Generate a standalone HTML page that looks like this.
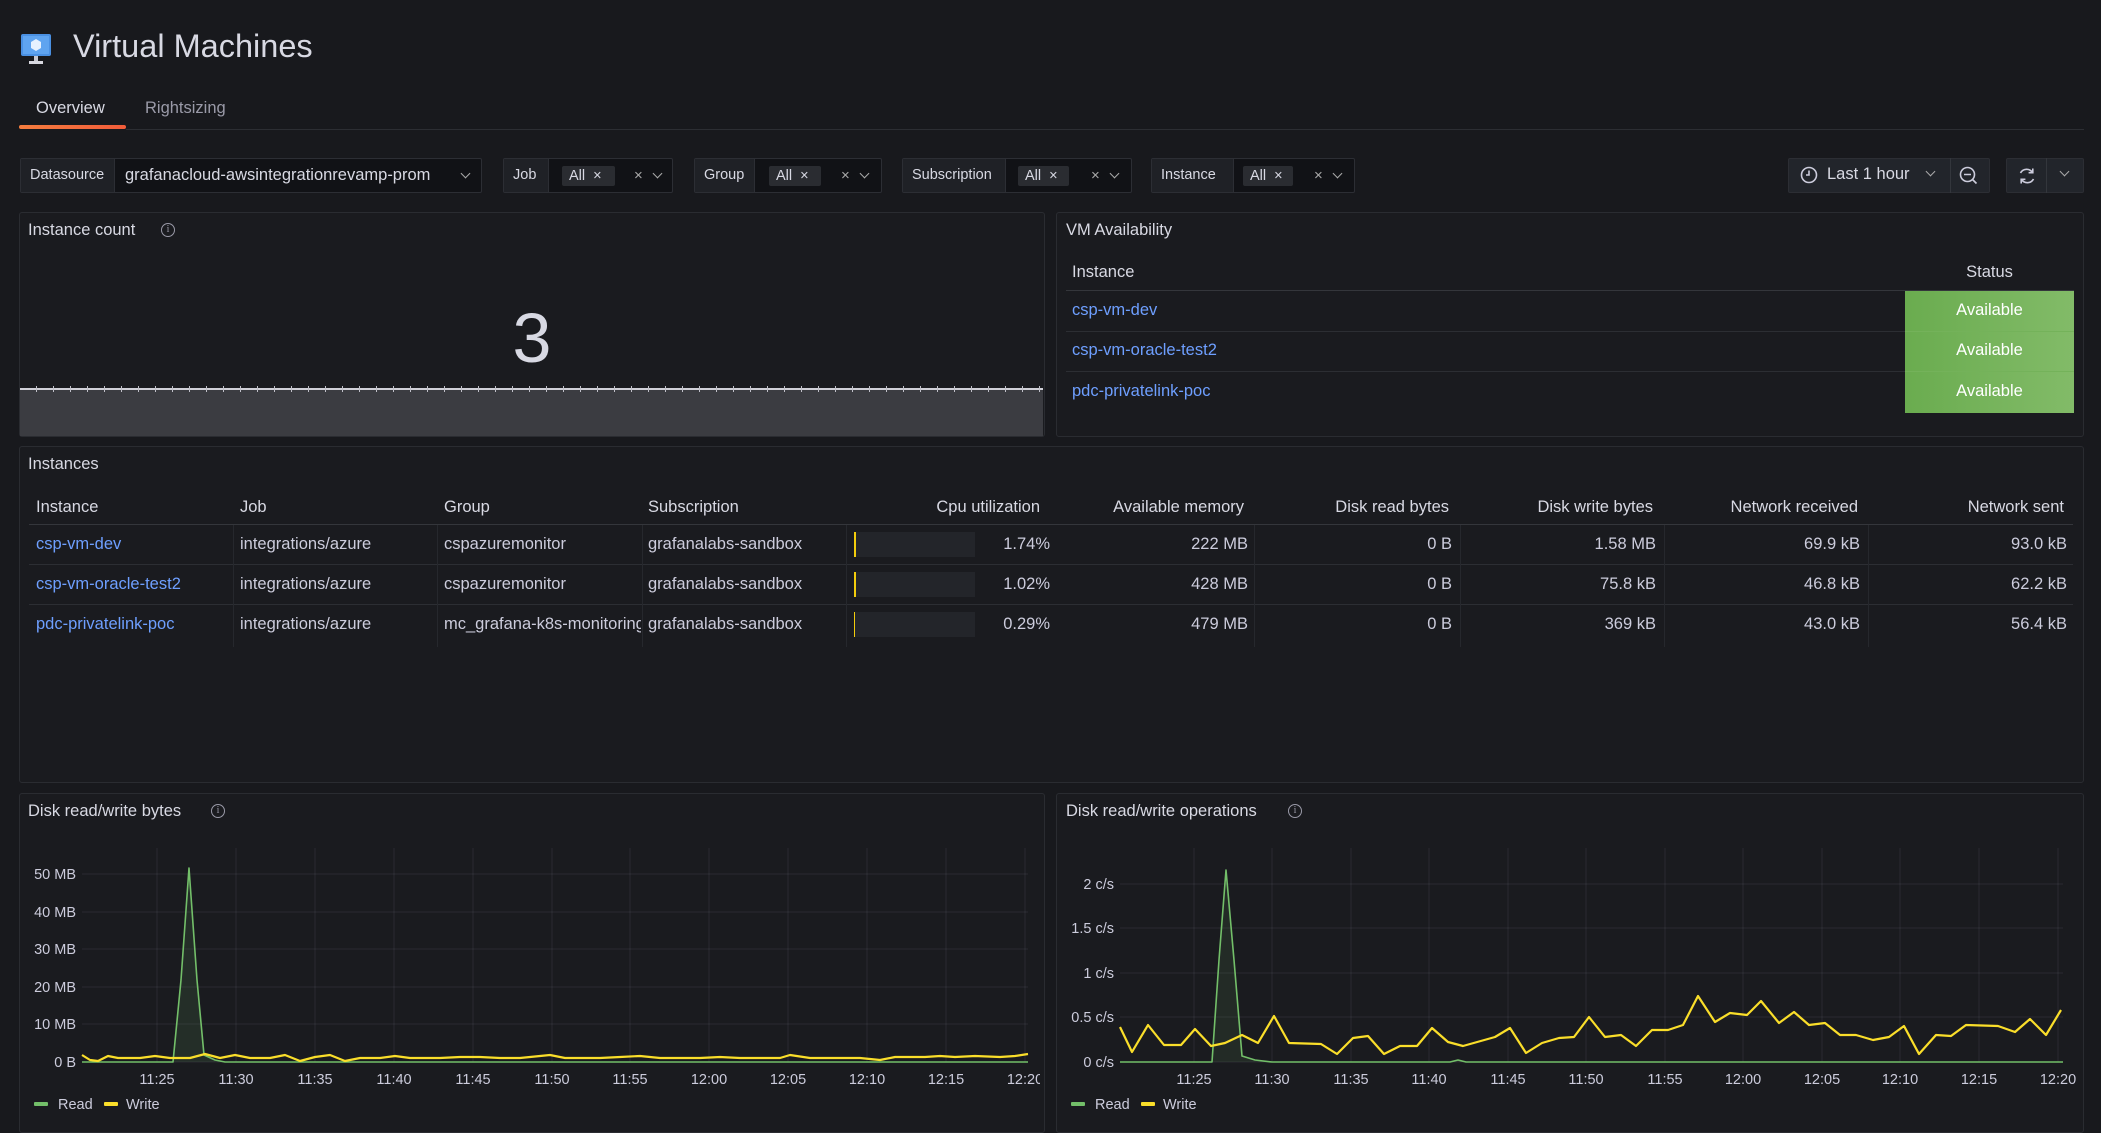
<!DOCTYPE html>
<html><head><meta charset="utf-8">
<style>
*{box-sizing:border-box;margin:0;padding:0}
body{width:2101px;height:1123px;background:#18191d;color:#ccccdc;font-family:"Liberation Sans",sans-serif;position:relative;overflow:hidden}
.a{position:absolute;white-space:nowrap}
.panel{position:absolute;border:1px solid #2a2c31;border-radius:3px;background:#1a1b1f}
.pt{position:absolute;font-size:16.5px;color:#d8d9e3;white-space:nowrap}
.vbox{position:absolute;top:158px;height:35px;border:1px solid #2c2e34;border-radius:2px;background:#111216}
.vl{position:absolute;top:0;left:0;height:33px;background:#1f2126;border-right:1px solid #2c2e34;font-size:14.5px;line-height:33px;padding-left:9px;color:#d8d9e3;white-space:nowrap}
.pill{position:absolute;top:7px;height:20px;background:#2a2c31;border-radius:2px;font-size:14.5px;line-height:20px;padding-left:7px;color:#d8d9e3;white-space:nowrap}
.x{position:absolute;top:0;font-size:15px;line-height:33px;color:#aaa}
.chev{position:absolute;top:13px;width:7px;height:7px;border-right:1.5px solid #aaa;border-bottom:1.5px solid #aaa;transform:rotate(45deg)}
.th{position:absolute;font-size:16.5px;color:#d8d9e3;white-space:nowrap}
.td{position:absolute;font-size:16.5px;color:#ccccdc;white-space:nowrap}
.lk{color:#6e9fff}
.r{text-align:right}
.hl{position:absolute;height:1px;background:#2c2e33}
.vline{position:absolute;width:1px;background:#26282d}
.info{position:absolute;width:14px;height:14px;border:1.3px solid #9a9aa8;border-radius:50%;font-size:10px;line-height:11px;text-align:center;color:#9a9aa8;font-family:"Liberation Serif",serif}
</style></head><body>

<svg class="a" style="left:20px;top:33px" width="32" height="32" viewBox="0 0 32 32">
<rect x="1" y="1" width="30" height="22" rx="2" fill="#4a90e2"/>
<rect x="3" y="3" width="26" height="18" fill="#5fa4f0"/>
<path d="M16 6 l5 3 v6 l-5 3 l-5 -3 v-6z" fill="#e6f1ff"/>
<rect x="14" y="23" width="4" height="6" fill="#c8c8d0"/>
<rect x="9" y="28" width="14" height="3" fill="#d8d8e0"/>
</svg>
<div class="a" style="left:73px;top:28px;font-size:32.5px;color:#d8d9e3">Virtual Machines</div>

<div class="a" style="left:36px;top:99px;font-size:16.5px;color:#d8d9e3">Overview</div>
<div class="a" style="left:145px;top:99px;font-size:16.5px;color:#9a9aa8">Rightsizing</div>
<div class="a" style="left:19px;top:125px;width:107px;height:4px;border-radius:2px;background:linear-gradient(90deg,#f57d3e,#f25c3a)"></div>
<div class="a" style="left:126px;top:129px;width:1958px;height:1px;background:#2c2e33"></div>

<div class="vbox" style="left:20px;width:462px"><div class="vl" style="width:94px">Datasource</div>
<div class="a" style="left:104px;top:0;line-height:33px;font-size:16.5px;color:#d8d9e3">grafanacloud-awsintegrationrevamp-prom</div>
<div class="chev" style="left:441px;top:11px"></div></div>

<div class="vbox" style="left:503px;width:170px"><div class="vl" style="width:45px">Job</div>
<div class="pill" style="left:58px;width:53px">All <span style="margin-left:4px">×</span></div>
<div class="x" style="left:130px">×</div><div class="chev" style="left:150px;top:11px"></div></div>

<div class="vbox" style="left:694px;width:188px"><div class="vl" style="width:60px">Group</div>
<div class="pill" style="left:74px;width:52px">All <span style="margin-left:4px">×</span></div>
<div class="x" style="left:146px">×</div><div class="chev" style="left:166px;top:11px"></div></div>

<div class="vbox" style="left:902px;width:230px"><div class="vl" style="width:103px">Subscription</div>
<div class="pill" style="left:115px;width:51px">All <span style="margin-left:4px">×</span></div>
<div class="x" style="left:188px">×</div><div class="chev" style="left:208px;top:11px"></div></div>

<div class="vbox" style="left:1151px;width:204px"><div class="vl" style="width:82px">Instance</div>
<div class="pill" style="left:91px;width:50px">All <span style="margin-left:4px">×</span></div>
<div class="x" style="left:162px">×</div><div class="chev" style="left:182px;top:11px"></div></div>

<div class="a" style="left:1788px;top:158px;width:202px;height:35px;background:#22252b;border:1px solid #2c2e34;border-radius:2px"></div>
<div class="a" style="left:1950px;top:158px;width:1px;height:35px;background:#33363c"></div>
<svg class="a" style="left:1800px;top:166px" width="18" height="18"><circle cx="9" cy="9" r="7.5" fill="none" stroke="#ccccdc" stroke-width="1.6"/><path d="M9 4.5V9H6" fill="none" stroke="#ccccdc" stroke-width="1.6"/></svg>
<div class="a" style="left:1827px;top:165px;font-size:16.5px;color:#d8d9e3">Last 1 hour</div>
<div class="chev" style="left:1927px;top:168px"></div>
<svg class="a" style="left:1959px;top:166px" width="20" height="20"><circle cx="8.5" cy="8.5" r="7" fill="none" stroke="#ccccdc" stroke-width="1.6"/><path d="M5 8.5h7M13.5 13.5l4 4" stroke="#ccccdc" stroke-width="1.6"/></svg>
<div class="a" style="left:2006px;top:158px;width:78px;height:35px;background:#22252b;border:1px solid #2c2e34;border-radius:2px"></div>
<div class="a" style="left:2046px;top:158px;width:1px;height:35px;background:#33363c"></div>
<svg class="a" style="left:2017px;top:166px" width="20" height="20"><path d="M15.5 6.5A7 7 0 0 0 3.5 7M4.5 13.5A7 7 0 0 0 16.5 13" fill="none" stroke="#ccccdc" stroke-width="1.6"/><path d="M15.8 2.5v4.2h-4.2M4.2 17.5v-4.2h4.2" fill="none" stroke="#ccccdc" stroke-width="1.6"/></svg>
<div class="chev" style="left:2061px;top:168px"></div>

<div class="panel" style="left:19px;top:212px;width:1026px;height:225px"></div>
<div class="pt" style="left:28px;top:221px">Instance count</div>
<div class="info" style="left:161px;top:223px">i</div>
<div class="a" style="left:20px;top:389px;width:1023px;height:47px;background:#3b3c41"></div>
<div class="a" style="left:20px;top:388px;width:1023px;height:2px;background:#d0d0d8"></div>
<div class="a" style="left:20px;top:386px;width:1023px;height:6px;background:repeating-linear-gradient(90deg,transparent 0 16px,#c0c0c8 16px 17px)"></div>
<div class="a" style="left:500px;top:298px;font-size:70px;color:#d8d9e3;width:64px;text-align:center">3</div>

<div class="panel" style="left:1056px;top:212px;width:1028px;height:225px"></div>
<div class="pt" style="left:1066px;top:221px">VM Availability</div>
<div class="th" style="left:1072px;top:263px">Instance</div>
<div class="th" style="left:1905px;width:169px;top:263px;text-align:center">Status</div>
<div class="hl" style="left:1066px;top:290px;width:1008px;background:#34363b"></div>
<div class="hl" style="left:1066px;top:331px;width:839px"></div>
<div class="hl" style="left:1066px;top:371px;width:839px"></div>
<div class="a" style="left:1905px;top:291px;width:169px;height:122px;background:linear-gradient(90deg,#6aac4f,#82bb68)"></div>
<div class="hl" style="left:1905px;top:331px;width:169px;background:#74b25a"></div>
<div class="hl" style="left:1905px;top:371px;width:169px;background:#74b25a"></div>
<div class="td lk" style="left:1072px;top:301px">csp-vm-dev</div>
<div class="td lk" style="left:1072px;top:341px">csp-vm-oracle-test2</div>
<div class="td lk" style="left:1072px;top:382px">pdc-privatelink-poc</div>
<div class="td" style="left:1905px;width:169px;text-align:center;top:301px;color:#fff">Available</div>
<div class="td" style="left:1905px;width:169px;text-align:center;top:341px;color:#fff">Available</div>
<div class="td" style="left:1905px;width:169px;text-align:center;top:382px;color:#fff">Available</div>

<div class="panel" style="left:19px;top:446px;width:2065px;height:337px"></div>
<div class="pt" style="left:28px;top:455px">Instances</div>
<div class="th" style="left:36px;top:498px">Instance</div>
<div class="th" style="left:240px;top:498px">Job</div>
<div class="th" style="left:444px;top:498px">Group</div>
<div class="th" style="left:648px;top:498px">Subscription</div>
<div class="th r" style="left:840px;width:200px;top:498px">Cpu utilization</div>
<div class="th r" style="left:1044px;width:200px;top:498px">Available memory</div>
<div class="th r" style="left:1249px;width:200px;top:498px">Disk read bytes</div>
<div class="th r" style="left:1453px;width:200px;top:498px">Disk write bytes</div>
<div class="th r" style="left:1658px;width:200px;top:498px">Network received</div>
<div class="th r" style="left:1864px;width:200px;top:498px">Network sent</div>
<div class="hl" style="left:29px;top:524px;width:2044px;background:#34363b"></div>
<div class="hl" style="left:29px;top:564px;width:2044px"></div>
<div class="hl" style="left:29px;top:604px;width:2044px"></div>
<div class="vline" style="left:233px;top:525px;height:122px"></div>
<div class="vline" style="left:437px;top:525px;height:122px"></div>
<div class="vline" style="left:642px;top:525px;height:122px"></div>
<div class="vline" style="left:846px;top:525px;height:122px"></div>
<div class="vline" style="left:1254px;top:525px;height:122px"></div>
<div class="vline" style="left:1460px;top:525px;height:122px"></div>
<div class="vline" style="left:1664px;top:525px;height:122px"></div>
<div class="vline" style="left:1868px;top:525px;height:122px"></div>

<div class="td lk" style="left:36px;top:535px">csp-vm-dev</div>
<div class="td lk" style="left:36px;top:575px">csp-vm-oracle-test2</div>
<div class="td lk" style="left:36px;top:615px">pdc-privatelink-poc</div>
<div class="td" style="left:240px;top:535px">integrations/azure</div>
<div class="td" style="left:240px;top:575px">integrations/azure</div>
<div class="td" style="left:240px;top:615px">integrations/azure</div>
<div class="td" style="left:444px;top:535px">cspazuremonitor</div>
<div class="td" style="left:444px;top:575px">cspazuremonitor</div>
<div class="td" style="left:444px;top:615px;width:197px;overflow:hidden">mc_grafana-k8s-monitoring</div>
<div class="td" style="left:648px;top:535px">grafanalabs-sandbox</div>
<div class="td" style="left:648px;top:575px">grafanalabs-sandbox</div>
<div class="td" style="left:648px;top:615px">grafanalabs-sandbox</div>

<div class="a" style="left:854px;top:532px;width:121px;height:25px;background:#23252a"></div>
<div class="a" style="left:854px;top:532px;width:2px;height:25px;background:#f2cc0c"></div>
<div class="a" style="left:854px;top:572px;width:121px;height:25px;background:#23252a"></div>
<div class="a" style="left:854px;top:572px;width:2px;height:25px;background:#f2cc0c"></div>
<div class="a" style="left:854px;top:612px;width:121px;height:25px;background:#23252a"></div>
<div class="a" style="left:854px;top:612px;width:1px;height:25px;background:#f2cc0c"></div>
<div class="td r" style="left:950px;width:100px;top:535px">1.74%</div>
<div class="td r" style="left:950px;width:100px;top:575px">1.02%</div>
<div class="td r" style="left:950px;width:100px;top:615px">0.29%</div>

<div class="td r" style="left:1048px;width:200px;top:535px">222 MB</div>
<div class="td r" style="left:1048px;width:200px;top:575px">428 MB</div>
<div class="td r" style="left:1048px;width:200px;top:615px">479 MB</div>
<div class="td r" style="left:1252px;width:200px;top:535px">0 B</div>
<div class="td r" style="left:1252px;width:200px;top:575px">0 B</div>
<div class="td r" style="left:1252px;width:200px;top:615px">0 B</div>
<div class="td r" style="left:1456px;width:200px;top:535px">1.58 MB</div>
<div class="td r" style="left:1456px;width:200px;top:575px">75.8 kB</div>
<div class="td r" style="left:1456px;width:200px;top:615px">369 kB</div>
<div class="td r" style="left:1660px;width:200px;top:535px">69.9 kB</div>
<div class="td r" style="left:1660px;width:200px;top:575px">46.8 kB</div>
<div class="td r" style="left:1660px;width:200px;top:615px">43.0 kB</div>
<div class="td r" style="left:1867px;width:200px;top:535px">93.0 kB</div>
<div class="td r" style="left:1867px;width:200px;top:575px">62.2 kB</div>
<div class="td r" style="left:1867px;width:200px;top:615px">56.4 kB</div>

<div class="panel" style="left:19px;top:793px;width:1026px;height:340px"></div>
<div class="pt" style="left:28px;top:802px">Disk read/write bytes</div>
<div class="info" style="left:211px;top:804px">i</div>
<div class="panel" style="left:1056px;top:793px;width:1028px;height:340px"></div>
<div class="pt" style="left:1066px;top:802px">Disk read/write operations</div>
<div class="info" style="left:1288px;top:804px">i</div>

<svg class="a" style="left:0;top:0" width="2101" height="1123" font-family="Liberation Sans, sans-serif" font-size="14.5" fill="#ccccdc">
<defs><clipPath id="cl"><rect x="0" y="840" width="1040" height="283"/></clipPath><clipPath id="cr"><rect x="1056" y="840" width="1020" height="283"/></clipPath></defs>
<g stroke="rgba(204,204,220,0.09)" stroke-width="1">
<path d="M82 874H1028M82 912H1028M82 949H1028M82 987H1028M82 1024H1028M82 1062H1028"/>
<path d="M157 848V1062M236 848V1062M315 848V1062M394 848V1062M473 848V1062M552 848V1062M630 848V1062M709 848V1062M788 848V1062M867 848V1062M946 848V1062M1025 848V1062"/>
<path d="M1120 884H2063M1120 928H2063M1120 973H2063M1120 1017H2063M1120 1062H2063"/>
<path d="M1194 848V1062M1272 848V1062M1351 848V1062M1429 848V1062M1508 848V1062M1586 848V1062M1665 848V1062M1743 848V1062M1822 848V1062M1900 848V1062M1979 848V1062M2058 848V1062"/>
</g>
<g text-anchor="end">
<text x="76" y="879">50 MB</text><text x="76" y="917">40 MB</text><text x="76" y="954">30 MB</text><text x="76" y="992">20 MB</text><text x="76" y="1029">10 MB</text><text x="76" y="1067">0 B</text>
<text x="1114" y="889">2 c/s</text><text x="1114" y="933">1.5 c/s</text><text x="1114" y="978">1 c/s</text><text x="1114" y="1022">0.5 c/s</text><text x="1114" y="1067">0 c/s</text>
</g>
<g text-anchor="middle" clip-path="url(#cl)">
<text x="157" y="1084">11:25</text><text x="236" y="1084">11:30</text><text x="315" y="1084">11:35</text><text x="394" y="1084">11:40</text><text x="473" y="1084">11:45</text><text x="552" y="1084">11:50</text><text x="630" y="1084">11:55</text><text x="709" y="1084">12:00</text><text x="788" y="1084">12:05</text><text x="867" y="1084">12:10</text><text x="946" y="1084">12:15</text><text x="1025" y="1084">12:20</text>
</g>
<g text-anchor="middle" clip-path="url(#cr)">
<text x="1194" y="1084">11:25</text><text x="1272" y="1084">11:30</text><text x="1351" y="1084">11:35</text><text x="1429" y="1084">11:40</text><text x="1508" y="1084">11:45</text><text x="1586" y="1084">11:50</text><text x="1665" y="1084">11:55</text><text x="1743" y="1084">12:00</text><text x="1822" y="1084">12:05</text><text x="1900" y="1084">12:10</text><text x="1979" y="1084">12:15</text><text x="2058" y="1084">12:20</text>
</g>
<path d="M82 1062H173L183 960L189 868L195 960L204 1055L215 1060L225 1062H1028" fill="rgba(115,191,105,0.12)" stroke="none"/>
<polyline points="82,1062 173,1062 181,980 189,868 197,980 204,1055 215,1060 225,1062 1028,1062" fill="none" stroke="#73bf69" stroke-width="1.6" stroke-linejoin="round"/>
<polyline points="82,1055 90,1060 98,1061 108,1056 118,1058 140,1058 155,1056 170,1058 190,1058 205,1054 220,1058 235,1055 250,1058 270,1058 285,1055 300,1061 315,1057 330,1055 345,1061 360,1058 380,1058 395,1056 410,1058 440,1058 460,1057 480,1057 500,1058 520,1058 550,1055 565,1058 600,1058 620,1057 640,1056 660,1058 700,1058 720,1057 740,1058 780,1058 790,1055 810,1058 840,1058 860,1058 880,1060 895,1057 925,1057 940,1056 955,1057 975,1056 1000,1057 1015,1056 1028,1054" fill="none" stroke="#fade2a" stroke-width="2.2" stroke-linejoin="round"/>
<polyline points="1120,1062 1212,1062 1219,960 1226,870 1234,960 1242,1056 1255,1060 1272,1062 1450,1062 1458,1060 1466,1062 2063,1062" fill="rgba(115,191,105,0.1)" stroke="#73bf69" stroke-width="1.6" stroke-linejoin="round"/>
<polyline points="1120,1027 1132,1052 1148,1025 1164,1045 1181,1045 1195,1029 1211,1046 1225,1043 1242,1035 1258,1043 1274,1016 1289,1043 1321,1044 1337,1054 1353,1038 1368,1036 1384,1054 1400,1046 1417,1046 1432,1028 1448,1042 1463,1046 1495,1037 1510,1028 1526,1053 1542,1043 1559,1038 1574,1037 1589,1017 1605,1037 1621,1035 1636,1046 1652,1030 1668,1030 1683,1025 1698,996 1715,1022 1730,1013 1747,1015 1761,1001 1779,1023 1794,1012 1809,1025 1825,1023 1840,1035 1856,1035 1873,1040 1889,1037 1904,1026 1919,1054 1936,1035 1951,1036 1966,1025 1998,1026 2015,1032 2030,1019 2046,1035 2061,1010" fill="none" stroke="#fade2a" stroke-width="2.2" stroke-linejoin="round"/>
<rect x="34" y="1102" width="14" height="4" rx="1" fill="#73bf69"/><text x="58" y="1109">Read</text>
<rect x="104" y="1102" width="14" height="4" rx="1" fill="#fade2a"/><text x="126" y="1109">Write</text>
<rect x="1071" y="1102" width="14" height="4" rx="1" fill="#73bf69"/><text x="1095" y="1109">Read</text>
<rect x="1141" y="1102" width="14" height="4" rx="1" fill="#fade2a"/><text x="1163" y="1109">Write</text>
</svg>
</body></html>
